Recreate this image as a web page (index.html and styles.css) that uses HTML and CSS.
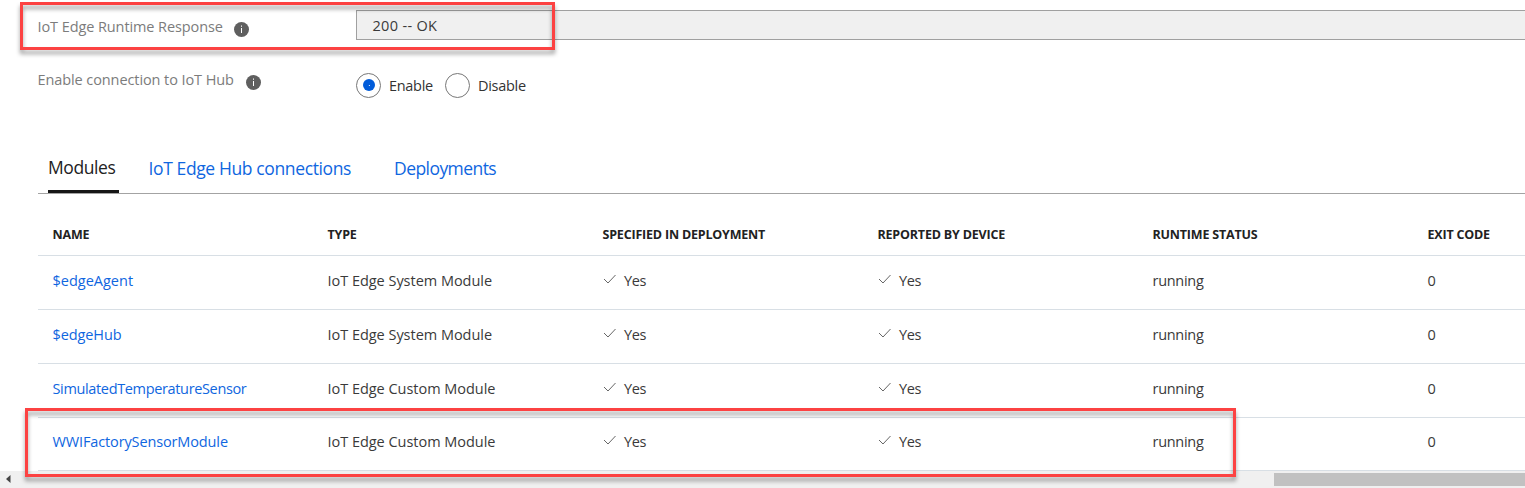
FILE: index.html
```html
<!DOCTYPE html>
<html lang="en">
<head>
<meta charset="utf-8">
<title>Device details</title>
<link rel="stylesheet" href="styles.css">
</head>
<body>
<main class="page">
  <section class="field field-response">
    <span class="label label-response">IoT Edge Runtime Response</span>
    <svg class="info" viewBox="0 0 15 15"><circle cx="7.5" cy="7.5" r="7.5"/><path d="M7 3.6h1v1.2H7zM7 6h1v5H7z"/></svg>
    <div class="input">200 -- OK</div>
  </section>
  <section class="field field-connection">
    <span class="label label-connection">Enable connection to IoT Hub</span>
    <svg class="info" viewBox="0 0 15 15"><circle cx="7.5" cy="7.5" r="7.5"/><path d="M7 3.6h1v1.2H7zM7 6h1v5H7z"/></svg>
    <div class="radios">
      <svg class="radio" viewBox="0 0 25 25"><circle class="ring" cx="12.5" cy="12.5" r="12"/><circle class="dot" cx="13" cy="12" r="6"/><circle class="pin" cx="13.4" cy="12.5" r=".6"/></svg>
      <span class="option option-enable">Enable</span>
      <svg class="radio" viewBox="0 0 25 25"><circle class="ring" cx="12.5" cy="12.5" r="12"/></svg>
      <span class="option option-disable">Disable</span>
    </div>
  </section>
  <nav class="tabs">
    <a class="tab tab-active">Modules</a>
    <a class="tab tab-hub">IoT Edge Hub connections</a>
    <a class="tab tab-deploy">Deployments</a>
  </nav>
  <section class="table">
    <div class="row head">
      <span>NAME</span><span>TYPE</span><span>SPECIFIED IN DEPLOYMENT</span><span>REPORTED BY DEVICE</span><span>RUNTIME STATUS</span><span>EXIT CODE</span>
    </div>
    <div class="row">
      <a>$edgeAgent</a><span class="type">IoT Edge System Module</span>
      <span class="yes"><svg class="check" viewBox="0 0 14 12"><path d="M1 6l4 4L12.500 2"/></svg>Yes</span>
      <span class="yes"><svg class="check" viewBox="0 0 14 12"><path d="M1 6l4 4L12.500 2"/></svg>Yes</span>
      <span class="status">running</span><span>0</span>
    </div>
    <div class="row">
      <a class="n-hub">$edgeHub</a><span class="type">IoT Edge System Module</span>
      <span class="yes"><svg class="check" viewBox="0 0 14 12"><path d="M1 6l4 4L12.500 2"/></svg>Yes</span>
      <span class="yes"><svg class="check" viewBox="0 0 14 12"><path d="M1 6l4 4L12.500 2"/></svg>Yes</span>
      <span class="status">running</span><span>0</span>
    </div>
    <div class="row">
      <a class="n-sim">SimulatedTemperatureSensor</a><span class="type">IoT Edge Custom Module</span>
      <span class="yes"><svg class="check" viewBox="0 0 14 12"><path d="M1 6l4 4L12.500 2"/></svg>Yes</span>
      <span class="yes"><svg class="check" viewBox="0 0 14 12"><path d="M1 6l4 4L12.500 2"/></svg>Yes</span>
      <span class="status">running</span><span>0</span>
    </div>
    <div class="row last">
      <a class="n-wwi">WWIFactorySensorModule</a><span class="type">IoT Edge Custom Module</span>
      <span class="yes"><svg class="check" viewBox="0 0 14 12"><path d="M1 6l4 4L12.500 2"/></svg>Yes</span>
      <span class="yes"><svg class="check" viewBox="0 0 14 12"><path d="M1 6l4 4L12.500 2"/></svg>Yes</span>
      <span class="status">running</span><span>0</span>
    </div>
  </section>
  <footer class="scrollbar">
    <svg class="arrow" viewBox="0 0 5 8"><path d="M4.500 0v8L0 4z"/></svg>
    <div class="thumb"></div>
  </footer>
  <div class="mark mark-response"></div>
  <div class="mark mark-module"></div>
</main>
</body>
</html>
```

FILE: styles.css
```css
* { box-sizing: border-box; }
body { margin: 0; background: #fff; }
.page {
  position: relative;
  width: 1525px;
  height: 488px;
  overflow: hidden;
  display: flex;
  flex-direction: column;
  font: 14.5px/20px "Open Sans", "Noto Sans", sans-serif;
  color: #3a3a3a;
  white-space: nowrap;
}
.field { display: flex; align-items: flex-start; padding-left: 37px; flex: none; }
.field-response { height: 73px; padding-top: 10px; }
.field-connection { height: 75px; }
.label { color: #7c7c7c; flex: none; padding: 7px 0 0 .5px; letter-spacing: -.09px; }
.label-response { width: 197px; }
.label-connection { width: 209px; margin-top: -10px; }
.info { width: 15px; height: 15px; flex: none; fill: #5f5f5f; }
.info path { fill: #fff; }
.field-response .info { margin-top: 12px; }
.field-connection .info { margin-top: 2px; }
.input {
  margin-left: 107px;
  flex: 1;
  height: 30px;
  border: 1px solid #a0a0a0;
  border-right: 0;
  background: #f0f0f0;
  padding: 5px 0 0 15.5px;
  letter-spacing: .32px;
}
.radios { display: flex; align-items: center; margin-left: 95px; height: 25px; }
.radio { width: 25px; height: 25px; flex: none; }
.ring { fill: #fff; stroke: #777; }
.dot { fill: #015cda; }
.pin { fill: #fff; }
.option { color: #333; padding-left: 8px; letter-spacing: -.3px; }
.option-enable { width: 64px; }
.tabs {
  display: flex;
  flex: none;
  margin-left: 38px;
  height: 46px;
  border-bottom: 1px solid #a3a3a3;
  font-size: 17.5px;
  line-height: 24px;
  color: #0f66e0;
}
.tab { padding-top: 8px; height: 45px; }
.tab-active { margin-left: 10px; width: 71px; padding-top: 7px; color: #222; border-bottom: 3px solid #161616; font-weight: 500; letter-spacing: -.42px; }
.tab-hub { margin-left: 29.5px; width: 245.5px; letter-spacing: -.38px; }
.tab-deploy { letter-spacing: -.56px; }
.table { margin-left: 38px; flex: none; }
.row {
  display: grid;
  grid-template-columns: repeat(4, 275px) 275px 1fr;
  height: 54px;
  padding: 15px 0 0 14.5px;
  border-bottom: 1px solid #d8dfe5;
}
.row a { color: #0f66e0; }
.head { height: 62px; padding-top: 31px; font-size: 12.5px; font-weight: 700; color: #222; letter-spacing: -.19px; }
.last { height: 53px; padding-top: 14px; }
.type { letter-spacing: -.03px; }
.status { letter-spacing: -.28px; }
.n-hub { letter-spacing: -.1px; }
.n-sim { letter-spacing: -.35px; }
.n-wwi { letter-spacing: -.13px; }
.yes { display: flex; letter-spacing: -.4px; padding-left: .5px; }
.check { width: 14px; height: 12px; margin: 2px 7px 0 0; fill: none; stroke: #666; stroke-width: 1; }
.scrollbar { flex: none; height: 17px; display: flex; background: #f0f0f0; padding-top: 2px; }
.arrow { width: 5px; height: 8px; margin: 2px 0 0 6px; fill: #444; }
.thumb { margin-left: 1263px; flex: 1; height: 13px; background: #c1c1c1; }
.mark { position: absolute; border: 3px solid #fc4242; filter: drop-shadow(0 4px 2px rgba(0, 0, 0, .38)); }
.mark-response { left: 20px; top: 2px; width: 535px; height: 48px; }
.mark-module { left: 25px; top: 408px; width: 1211px; height: 69px; }
```
